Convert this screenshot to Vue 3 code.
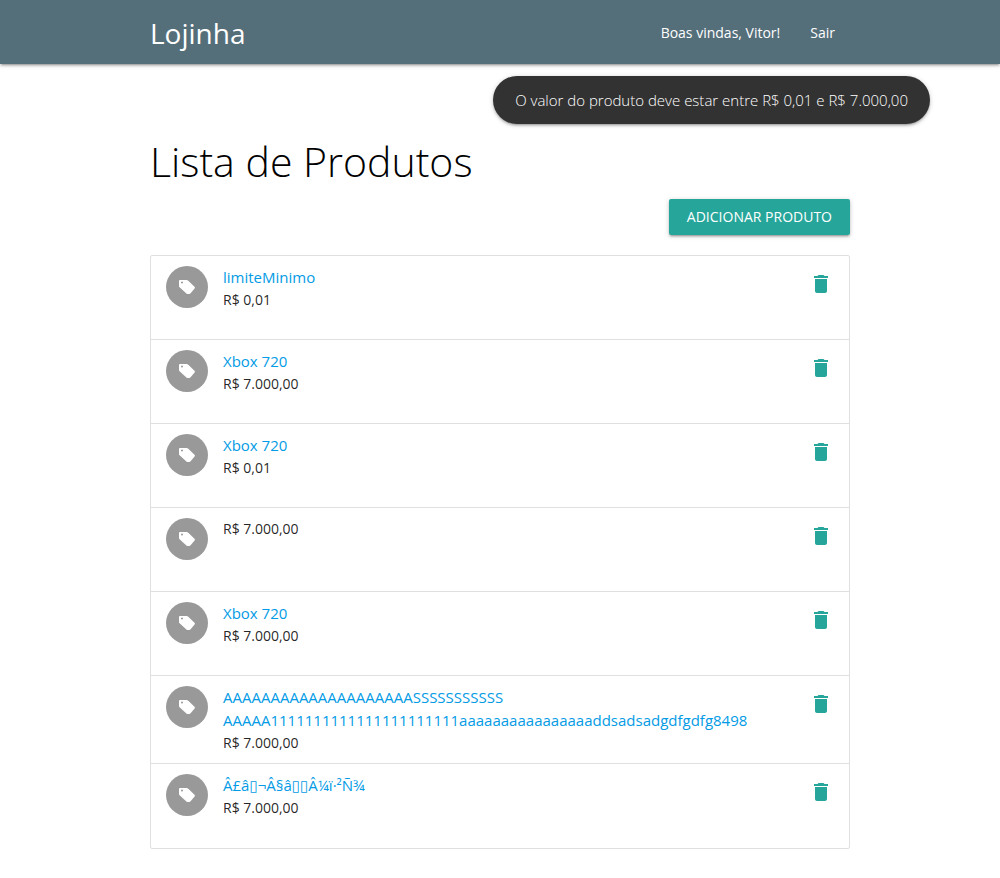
<script setup>
import { ref } from 'vue'

const products = ref([
  { id: 1, name: 'limiteMinimo', price: 'R$ 0,01' },
  { id: 2, name: 'Xbox 720', price: 'R$ 7.000,00' },
  { id: 3, name: 'Xbox 720', price: 'R$ 0,01' },
  { id: 4, name: '', price: 'R$ 7.000,00' },
  { id: 5, name: 'Xbox 720', price: 'R$ 7.000,00' },
  {
    id: 6,
    name: 'AAAAAAAAAAAAAAAAAAAASSSSSSSSSSS AAAAA1111111111111111111111aaaaaaaaaaaaaaaaddsadsadgdfgdfg8498',
    price: 'R$ 7.000,00',
  },
  { id: 7, name: 'Â£â▯¬Â§â▯▯Â¼ï·²Ñ¾', price: 'R$ 7.000,00' },
])

function remove(id) {
  products.value = products.value.filter((p) => p.id !== id)
}
</script>

<template>
  <div class="page">
    <header class="navbar">
      <nav class="container nav-inner">
        <a class="brand" href="#">Lojinha</a>
        <div class="links">
          <a href="#">Boas vindas, Vitor!</a>
          <a href="#">Sair</a>
        </div>
      </nav>
    </header>

    <div class="toast" role="alert">O valor do produto deve estar entre R$ 0,01 e R$ 7.000,00</div>

    <main class="container">
      <h1>Lista de Produtos</h1>
      <div class="actions">
        <button class="add" type="button">ADICIONAR PRODUTO</button>
      </div>
      <ul class="collection">
        <li v-for="p in products" :key="p.id" class="item">
          <span class="circle">
            <svg viewBox="0 0 16 14" width="16" height="14" aria-hidden="true">
              <path
                fill="#fff"
                fill-rule="evenodd"
                d="M1 0H7.600Q8.400 0 9 .6L15.500 6.700Q16.300 7.500 15.600 8.400L11.600 13.300Q11 14 10.200 14H8.800Q8 14 7.400 13.400L.6 7.200Q0 6.600 0 5.900V1Q0 0 1 0zM3 1.500a1 1 0 1 0 0 2a1 1 0 1 0 0-2z"
              />
            </svg>
          </span>
          <div class="info">
            <a v-if="p.name" class="title" href="#">{{ p.name }}</a>
            <p class="price">{{ p.price }}</p>
          </div>
          <button class="delete" type="button" aria-label="Excluir" @click="remove(p.id)">
            <svg viewBox="0 0 24 24" width="24" height="24" aria-hidden="true">
              <path
                fill="#26a69a"
                d="M6 19c0 1.100.900 2 2 2h8c1.100 0 2-.900 2-2V7H6v12zM19 4h-3.500l-1-1h-5l-1 1H5v2h14V4z"
              />
            </svg>
          </button>
        </li>
      </ul>
    </main>
  </div>
</template>

<style>
body {
  background: #fff;
}
</style>

<style scoped>
.page {
  font-family: 'Open Sans', 'Noto Sans', 'DejaVu Sans', sans-serif;
  font-size: 14px;
  color: rgba(0, 0, 0, 0.87);
  padding-bottom: 29px;
}

a {
  text-decoration: none;
}

.container {
  width: 70%;
  margin: 0 auto;
}

.navbar {
  background: #546e7a;
  box-shadow: 0 2px 2px 0 rgba(0, 0, 0, 0.14), 0 3px 1px -2px rgba(0, 0, 0, 0.12),
    0 1px 5px 0 rgba(0, 0, 0, 0.2);
}

.nav-inner {
  display: flex;
  justify-content: space-between;
  height: 64px;
  line-height: 66px;
}

.brand {
  color: #fff;
  font-size: 28px;
}

.links {
  display: flex;
}

.links a {
  color: #fff;
  padding: 0 15px;
}

.toast {
  position: absolute;
  top: 76px;
  right: 7%;
  box-sizing: border-box;
  min-height: 48px;
  padding: 0 22px;
  border-radius: 24px;
  background: #323232;
  color: #fff;
  font-size: 15px;
  font-weight: 300;
  line-height: 48px;
  box-shadow: 0 2px 2px 0 rgba(0, 0, 0, 0.14), 0 3px 1px -2px rgba(0, 0, 0, 0.12),
    0 1px 5px 0 rgba(0, 0, 0, 0.2);
}

h1 {
  margin: 74px 0 15px;
  color: #000;
  font-size: 41px;
  font-weight: 300;
  line-height: 46px;
}

.actions {
  display: flex;
  justify-content: flex-end;
}

.add {
  height: 36px;
  padding: 0 18px;
  border: 0;
  border-radius: 2px;
  background: #26a69a;
  color: #fff;
  font: inherit;
  line-height: 36px;
  cursor: pointer;
  box-shadow: 0 2px 2px 0 rgba(0, 0, 0, 0.14), 0 3px 1px -2px rgba(0, 0, 0, 0.12),
    0 1px 5px 0 rgba(0, 0, 0, 0.2);
}

.collection {
  margin: 20px 0 0;
  padding: 0;
  list-style: none;
  border: 1px solid #e0e0e0;
  border-radius: 2px;
}

.item {
  display: flex;
  align-items: flex-start;
  box-sizing: border-box;
  min-height: 84px;
  padding: 10px 16px 10px 15px;
  border-bottom: 1px solid #e0e0e0;
}

.item:last-child {
  border-bottom: 0;
}

.circle {
  display: flex;
  flex: none;
  align-items: center;
  justify-content: center;
  width: 42px;
  height: 42px;
  margin-right: 15px;
  border-radius: 50%;
  background: #999;
}

.info {
  flex: 1;
  min-width: 0;
}

.title {
  display: block;
  color: #039be5;
  font-size: 15px;
  line-height: 23px;
  overflow-wrap: anywhere;
}

.price {
  margin: 0;
  line-height: 21px;
}

.delete {
  flex: none;
  margin-top: 6px;
  padding: 0;
  border: 0;
  background: none;
  line-height: 0;
  cursor: pointer;
}
</style>
